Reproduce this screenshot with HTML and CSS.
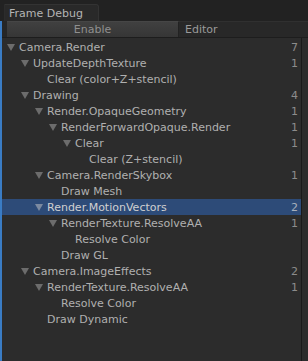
FILE: index.html
```html
<!DOCTYPE html>
<html lang="en">
<head>
    <meta charset="UTF-8">
    <title>Frame Debug</title>
    <link rel="stylesheet" href="styles.css">
</head>
<body>
    <div class="tabbar">
        <div class="tab">Frame Debug</div>
    </div>

    <div class="panel">
        <div class="toolbar">
            <div class="enable">Enable</div>
            <div class="target">Editor</div>
        </div>

        <div class="content">
            <div class="tree">
                <div class="row l0"><span class="fold"></span><span class="name">Camera.Render</span><span class="count">7</span></div>
                <div class="row l1"><span class="fold"></span><span class="name">UpdateDepthTexture</span><span class="count">1</span></div>
                <div class="row l2"><span class="leaf"></span><span class="name">Clear (color+Z+stencil)</span></div>
                <div class="row l1"><span class="fold"></span><span class="name">Drawing</span><span class="count">4</span></div>
                <div class="row l2"><span class="fold"></span><span class="name">Render.OpaqueGeometry</span><span class="count">1</span></div>
                <div class="row l3"><span class="fold"></span><span class="name">RenderForwardOpaque.Render</span><span class="count">1</span></div>
                <div class="row l4"><span class="fold"></span><span class="name">Clear</span><span class="count">1</span></div>
                <div class="row l5"><span class="leaf"></span><span class="name">Clear (Z+stencil)</span></div>
                <div class="row l2"><span class="fold"></span><span class="name">Camera.RenderSkybox</span><span class="count">1</span></div>
                <div class="row l3"><span class="leaf"></span><span class="name">Draw Mesh</span></div>
                <div class="row l2 selected"><span class="fold"></span><span class="name">Render.MotionVectors</span><span class="count">2</span></div>
                <div class="row l3"><span class="fold"></span><span class="name">RenderTexture.ResolveAA</span><span class="count">1</span></div>
                <div class="row l4"><span class="leaf"></span><span class="name">Resolve Color</span></div>
                <div class="row l3"><span class="leaf"></span><span class="name">Draw GL</span></div>
                <div class="row l1"><span class="fold"></span><span class="name">Camera.ImageEffects</span><span class="count">2</span></div>
                <div class="row l2"><span class="fold"></span><span class="name">RenderTexture.ResolveAA</span><span class="count">1</span></div>
                <div class="row l3"><span class="leaf"></span><span class="name">Resolve Color</span></div>
                <div class="row l2"><span class="leaf"></span><span class="name">Draw Dynamic</span></div>
            </div>
            <div class="splitter"></div>
        </div>
    </div>
</body>
</html>
```

FILE: styles.css
```css
* {
    margin: 0;
    padding: 0;
    box-sizing: border-box;
    font-family: 'DejaVu Sans', sans-serif;
}

body {
    width: 308px;
    height: 361px;
    background: #222222;
    color: #b0b0b0;
    font-size: 11px;
    overflow: hidden;
    display: flex;
    flex-direction: column;
}

.tabbar {
    height: 21px;
    display: flex;
    align-items: flex-end;
    padding-left: 4px;
}

.tab {
    width: 95px;
    height: 17px;
    padding-left: 4px;
    line-height: 17px;
    background: #292929;
    border-top: 1px solid #333;
    border-right: 1px solid #333;
    border-left: 1px solid #2c2c2c;
    border-radius: 0 3px 0 0;
    color: #b4b4b4;
}

.panel {
    flex: 1;
    display: flex;
    flex-direction: column;
    border-left: 2px solid #3a7cc4;
}

.toolbar {
    height: 17px;
    display: flex;
    padding-left: 5px;
    background: #262626;
    border-bottom: 1px solid #1d1d1d;
}

.enable {
    width: 172px;
    height: 16px;
    line-height: 16px;
    text-align: center;
    color: #8f8f8f;
    background: linear-gradient(#404040, #363636);
    border-top: 1px solid #464646;
    border-right: 1px solid #222;
}

.target {
    flex: 1;
    height: 16px;
    line-height: 16px;
    padding-left: 6px;
    color: #9a9a9a;
    background: #282828;
    border-top: 1px solid #303030;
}

.content {
    flex: 1;
    display: flex;
    background: #2c2c2c;
}

.tree {
    width: 299px;
    padding-top: 1px;
}

.splitter {
    flex: 1;
    border-left: 1px solid #1a1a1a;
}

.row {
    height: 16px;
    display: flex;
    align-items: center;
    padding-right: 3px;
    white-space: nowrap;
}

.row.selected {
    background: #2d4b78;
    color: #d0d0d0;
}

.l0 { padding-left: 5px; }
.l1 { padding-left: 19px; }
.l2 { padding-left: 33px; }
.l3 { padding-left: 47px; }
.l4 { padding-left: 61px; }
.l5 { padding-left: 75px; }

.fold,
.leaf {
    width: 12px;
    flex-shrink: 0;
}

.fold::before {
    content: '';
    display: block;
    width: 0;
    height: 0;
    border-left: 4px solid transparent;
    border-right: 4px solid transparent;
    border-top: 7px solid #6c6c6c;
}

.selected .fold::before {
    border-top-color: #7c8aa0;
}

.name {
    flex: 1;
}

.count {
    color: #8c8c8c;
}

.selected .count {
    color: #a8b0bd;
}
```
